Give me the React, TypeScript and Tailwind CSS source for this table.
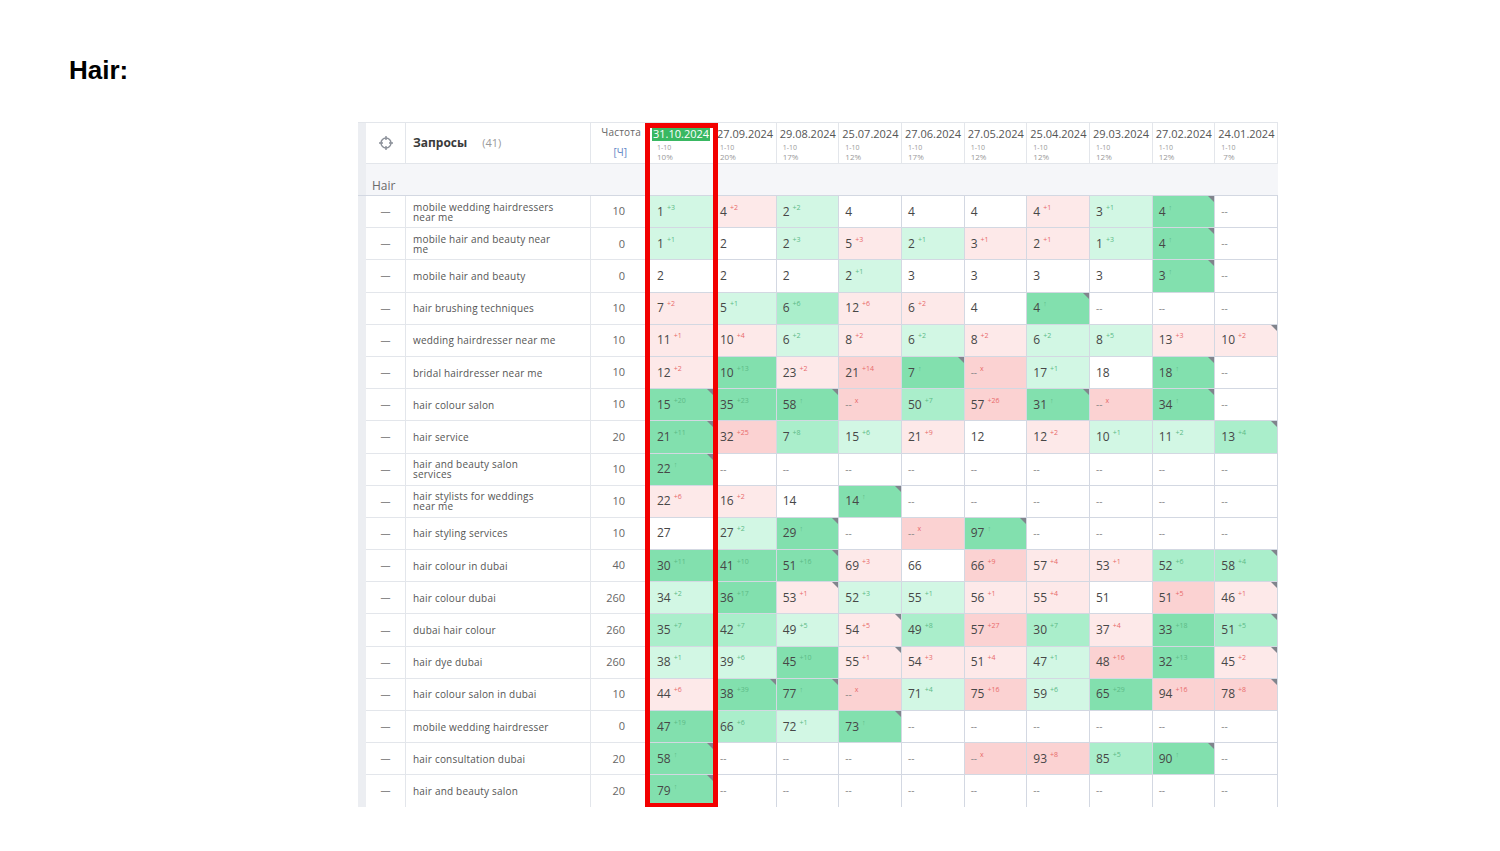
import React from "react";

const dates = [
  "31.10.2024",
  "27.09.2024",
  "29.08.2024",
  "25.07.2024",
  "27.06.2024",
  "27.05.2024",
  "25.04.2024",
  "29.03.2024",
  "27.02.2024",
  "24.01.2024",
];
const pct = ["10%", "20%", "17%", "12%", "17%", "12%", "12%", "12%", "12%", "7%"];

// value + delta + colour + optional corner mark (*)
const rows: [string, string, string][] = [
  ["mobile wedding hairdressers\nnear me", "10", "1+3l 4+2p 2+2l 4w 4w 4w 4+1p 3+1l 4^d* --w"],
  ["mobile hair and beauty near\nme", "0", "1+1l 2w 2+3l 5+3p 2+1l 3+1p 2+1p 1+3l 4^d* --w"],
  ["mobile hair and beauty", "0", "2w 2w 2w 2+1l 3w 3w 3w 3w 3^d* --w"],
  ["hair brushing techniques", "10", "7+2p 5+1l 6+6m 12+6p 6+2p 4w 4^d* --w --w --w"],
  ["wedding hairdresser near me", "10", "11+1p 10+4p 6+2l 8+2p 6+2l 8+2p 6+2l 8+5l 13+3p 10+2p*"],
  ["bridal hairdresser near me", "10", "12+2p 10+13d 23+2p 21+14P 7^d* --xP 17+1l 18w 18^d* --w"],
  ["hair colour salon", "10", "15+20d* 35+23d 58^d* --xP 50+7m 57+26P 31^d* --xP 34^d* --w"],
  ["hair service", "20", "21+11d* 32+25P 7+8m 15+6l 21+9p 12w 12+2p 10+1l 11+2l 13+4m*"],
  ["hair and beauty salon\nservices", "10", "22^d* --w --w --w --w --w --w --w --w --w"],
  ["hair stylists for weddings\nnear me", "10", "22+6p 16+2p 14w 14^d* --w --w --w --w --w --w"],
  ["hair styling services", "10", "27w 27+2l 29^d* --w --xP 97^d* --w --w --w --w"],
  ["hair colour in dubai", "40", "30+11d 41+10d 51+16d* 69+3p 66w 66+9P 57+4p 53+1p 52+6m 58+4m*"],
  ["hair colour dubai", "260", "34+2l 36+17d 53+1p* 52+3l 55+1l 56+1p 55+4p 51w 51+5P 46+1p*"],
  ["dubai hair colour", "260", "35+7m 42+7m 49+5l 54+5p* 49+8m 57+27P 30+7m 37+4p 33+18d 51+5m*"],
  ["hair dye dubai", "260", "38+1l 39+6l 45+10d 55+1p* 54+3p 51+4p 47+1l 48+16P 32+13d 45+2p*"],
  ["hair colour salon in dubai", "10", "44+6p 38+39d* 77^d* --xP 71+4l 75+16P 59+6l 65+29d 94+16P 78+8P*"],
  ["mobile wedding hairdresser", "0", "47+19d 66+6m 72+1l 73^d* --w --w --w --w --w --w"],
  ["hair consultation dubai", "20", "58^d* --w --w --w --w --xP 93+8P 85+5m 90^d* --w"],
  ["hair and beauty salon", "20", "79^d* --w --w --w --w --w --w --w --w --w"],
];

const bg: Record<string, string> = {
  w: "bg-white",
  p: "bg-[#fde9e9]",
  P: "bg-[#fbd2d2]",
  l: "bg-[#d2f7e4]",
  m: "bg-[#aaeecb]",
  d: "bg-[#82e0ae]",
};

type Cell = { v: string; d: string; c: string; t: boolean };

function parse(s: string): Cell[] {
  return s.split(" ").map((tok) => {
    const m = tok.match(/^(\d+|--)(\+\d+|\^|x)?([wpPlmd])(\*)?$/);
    if (!m) return { v: tok, d: "", c: "w", t: false };
    return { v: m[1], d: m[2] ?? "", c: m[3], t: !!m[4] };
  });
}

const cols = "grid grid-cols-[8px_40px_185px_55px_68px_repeat(9,minmax(0,1fr))]";

function Crosshair() {
  return (
    <svg width="16" height="16" viewBox="0 0 16 16" fill="none" stroke="#8b9099" strokeWidth="1.4">
      <circle cx="8" cy="8" r="5" />
      <path d="M8 1v4M8 11v4M1 8h4M11 8h4" />
    </svg>
  );
}

function DataCell({ cell, first }: { cell: Cell; first: boolean }) {
  const red = cell.c === "p" || cell.c === "P" || cell.d === "x";
  const delta = cell.d === "^" ? "↑" : cell.d;
  return (
    <div
      className={`relative flex items-center border-r border-b border-[#d3d8e2] ${bg[cell.c]} ${
        first ? "pl-[11px]" : "pl-[6px]"
      }`}
    >
      {cell.v === "--" ? (
        <span className="text-[10px] text-[#8a8a8a]">--</span>
      ) : (
        <span className="text-[12px] text-[#474747]">{cell.v}</span>
      )}
      {delta && (
        <span
          className={`ml-[3px] -mt-[9px] text-[7px] leading-none ${
            red ? "text-[#e86a6a]" : "text-[#5cba86]"
          }`}
        >
          {delta}
        </span>
      )}
      {cell.t && (
        <svg className="absolute top-0 right-0" width="6" height="6" viewBox="0 0 6 6">
          <polygon points="0,0 6,0 6,6" fill="#80848c" />
        </svg>
      )}
    </div>
  );
}

export default function App() {
  return (
    <div className="w-[1500px] h-[851px] bg-white overflow-hidden">
      <h1 className="pl-[69px] pt-[57px] text-[26px] leading-none font-bold text-black [font-family:'Liberation_Sans',Arial,sans-serif]">
        Hair:
      </h1>

      <div className="ml-[358px] mt-[39px] w-[920px] h-[685px] relative overflow-hidden [font-family:'Open_Sans',sans-serif]">
        {/* header */}
        <div className={`${cols} h-[42px] border-t border-[#e3e6eb]`}>
          <div className="bg-[#eceef2]" />
          <div className="flex items-center justify-center border-r border-b border-[#e3e6eb]">
            <Crosshair />
          </div>
          <div className="flex items-center pl-[7px] border-r border-b border-[#e3e6eb]">
            <span className="text-[12px] font-bold text-[#3a3a3a]">Запросы</span>
            <span className="ml-[15px] text-[11px] text-[#9a9a9a]">(41)</span>
          </div>
          <div className="flex flex-col items-end pr-[4px] pt-[2px] border-r border-b border-[#e3e6eb]">
            <span className="text-[10px] text-[#666] leading-[14px] tracking-[0.2px]">Частота</span>
            <span className="mr-[14px] mt-[6px] text-[10px] text-[#5d84c4] leading-[14px]">[Ч]</span>
          </div>
          {dates.map((d, i) => (
            <div
              key={d}
              className={`flex flex-col border-r border-b border-[#e3e6eb] pt-[4px] ${i === 0 ? "pl-[6px]" : "pl-[3px]"}`}
            >
              <span
                className={`text-[11px] leading-[14px] whitespace-nowrap ${
                  i === 0 ? "bg-[#39b862] text-white px-[1px] w-fit" : "text-[#555]"
                }`}
              >
                {d}
              </span>
              <span className={`mt-[3px] text-[7px] leading-[8px] text-[#9a9a9a] ${i === 0 ? "pl-[5px]" : "pl-[3px]"}`}>
                1-10
              </span>
              <span
                className={`text-[8px] leading-[9px] text-[#9a9a9a] ${
                  i === 0 ? "pl-[5px]" : i === 9 ? "pl-[5px]" : "pl-[3px]"
                }`}
              >
                {pct[i]}
              </span>
            </div>
          ))}
        </div>

        {/* group */}
        <div className="flex h-[32px] border-b border-[#d3d8e2] bg-[#f5f6f9]">
          <div className="w-[8px] bg-[#eceef2]" />
          <div className="flex items-end pb-[0px] pl-[6px] text-[12px] text-[#6a6a6a]">Hair</div>
        </div>

        {/* rows */}
        {rows.map(([q, f, s]) => (
          <div key={q} className={`${cols} h-[32.2px]`}>
            <div className="bg-[#eceef2]" />
            <div className="flex items-center justify-center border-r border-b border-[#e3e6eb] text-[10px] text-[#8a8a8a]">
              —
            </div>
            <div className="flex items-center pl-[7px] border-r border-b border-[#e3e6eb]">
              <span className="whitespace-pre text-[10px] leading-[10px] tracking-[0.2px] text-[#555]">{q}</span>
            </div>
            <div className="flex items-center justify-end pr-[20px] border-r border-b border-[#e3e6eb] text-[11px] text-[#666]">
              {f}
            </div>
            {parse(s).map((c, i) => (
              <DataCell key={i} cell={c} first={i === 0} />
            ))}
          </div>
        ))}

        {/* highlight frame */}
        <div className="absolute left-[287px] top-[1px] w-[73px] h-[685px] border-[5px] border-[#f20000] pointer-events-none" />
      </div>
    </div>
  );
}
